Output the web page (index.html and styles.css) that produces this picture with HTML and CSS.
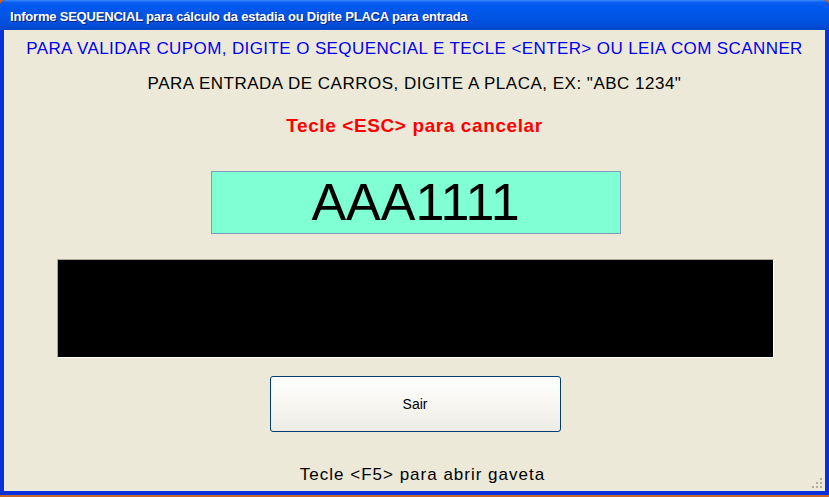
FILE: index.html
```html
<!DOCTYPE html>
<html lang="pt-BR">
<head>
  <meta charset="UTF-8" />
  <title>Entrada / Validação</title>
  <link rel="stylesheet" href="styles.css">
</head>
<body>
  <div class="window">
    <div class="titlebar">
      <span class="title">Informe SEQUENCIAL para cálculo da estadia ou Digite PLACA para entrada</span>
    </div>
    <div class="content">
      <p class="info-blue">PARA VALIDAR CUPOM, DIGITE O SEQUENCIAL E TECLE &lt;ENTER&gt; OU LEIA COM SCANNER</p>
      <p class="info-black">PARA ENTRADA DE CARROS, DIGITE A PLACA, EX: "ABC 1234"</p>
      <p class="cancel">Tecle &lt;ESC&gt; para cancelar</p>
      <div class="plate">AAA1111</div>
      <div class="display"></div>
      <button type="button" class="btn">Sair</button>
      <p class="footer">Tecle &lt;F5&gt; para abrir gaveta</p>
      <svg class="grip" width="12" height="12" viewBox="0 0 12 12">
        <rect x="9" y="1" width="2" height="2" fill="#b3ad98"/>
        <rect x="5" y="5" width="2" height="2" fill="#b3ad98"/>
        <rect x="9" y="5" width="2" height="2" fill="#b3ad98"/>
        <rect x="1" y="9" width="2" height="2" fill="#b3ad98"/>
        <rect x="5" y="9" width="2" height="2" fill="#b3ad98"/>
        <rect x="9" y="9" width="2" height="2" fill="#b3ad98"/>
      </svg>
    </div>
  </div>
</body>
</html>
```

FILE: styles.css
```css
/* XP style dialog */
body {
  margin: 0;
  padding: 0;
  background: #c8642e;
  font-family: "Liberation Sans", Arial, sans-serif;
  width: 829px;
  height: 497px;
  overflow: hidden;
}
.window {
  height: 495px;
  display: flex;
  flex-direction: column;
  background: #0831d9;
  border-radius: 6px 6px 0 0;
  overflow: hidden;
}
.titlebar {
  height: 30px;
  flex: none;
  display: flex;
  align-items: center;
  padding-left: 10px;
  background: linear-gradient(to bottom, #3a8cff 0%, #0a5fef 8%, #0058ee 20%, #0055e5 50%, #0050dc 80%, #0046c8 100%);
}
.title {
  color: #fff;
  font-weight: bold;
  font-size: 13px;
  letter-spacing: -0.2px;
  text-shadow: 1px 1px 0 #0a1f7d;
  padding-top: 3px;
}
.content {
  position: relative;
  flex: 1;
  margin: 0 4px 4px 4px;
  background: #ece9d8;
  display: flex;
  flex-direction: column;
  align-items: center;
  padding-top: 8px;
}
.content p { margin: 0; }
.info-blue {
  margin-top: 1px !important;
  color: #0000f0;
  font-size: 17px;
  letter-spacing: 0.4px;
  line-height: 20px;
}
.info-black {
  margin-top: 15px !important;
  color: #000;
  font-size: 17px;
  letter-spacing: 0.5px;
  line-height: 20px;
}
.cancel {
  margin-top: 21px !important;
  color: #ff0000;
  font-weight: bold;
  font-size: 19px;
  letter-spacing: 0.6px;
  line-height: 22px;
}
.plate {
  margin-top: 34px;
  margin-left: 2px;
  width: 408px;
  height: 61px;
  border: 1px solid #7f9db9;
  background: #80ffd4;
  color: #000;
  font-size: 52px;
  line-height: 61px;
  text-align: center;
}
.display {
  margin-top: 25px;
  margin-left: 2px;
  width: 715px;
  height: 97px;
  background: #000;
  border-top: 1px solid #aca899;
  border-left: 1px solid #aca899;
  border-bottom: 1px solid #fff;
  border-right: 1px solid #fff;
}
.btn {
  margin-top: 18px;
  margin-left: 1px;
  width: 291px;
  height: 56px;
  border: 1px solid #003c74;
  border-radius: 3px;
  background: linear-gradient(to bottom, #ffffff 0%, #f5f4ef 60%, #ecebe4 100%);
  font-family: "Liberation Sans", Arial, sans-serif;
  font-size: 14px;
  color: #000;
  padding: 0;
}
.footer {
  margin-top: 33px !important;
  margin-left: 16px !important;
  color: #000;
  font-size: 17px;
  letter-spacing: 1px;
  line-height: 20px;
}
.grip {
  position: absolute;
  right: 2px;
  bottom: 2px;
}
```
